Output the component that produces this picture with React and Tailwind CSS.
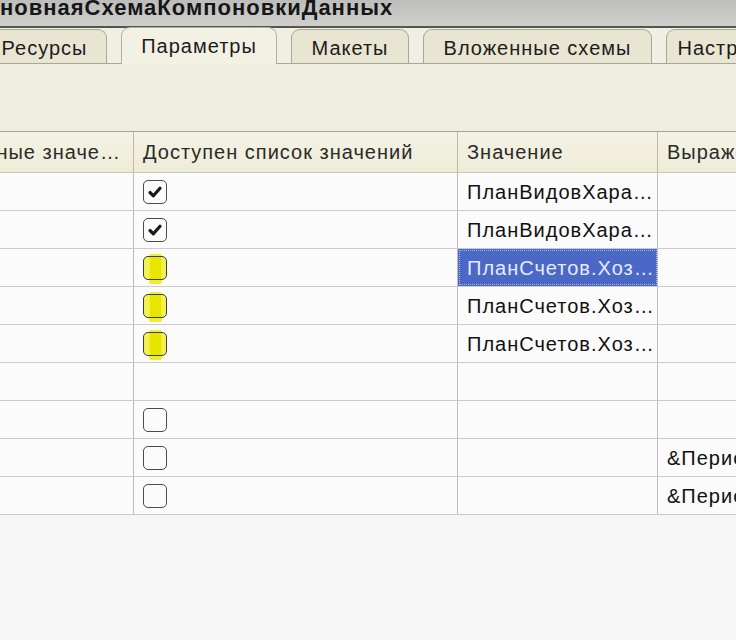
import React from "react";

function Check({ kind }) {
  if (!kind) return null;
  if (kind === "yellow") {
    return (
      <div className="relative w-[24px] h-[24px]">
        <div className="absolute left-[6px] top-[-2px] w-[13px] h-[30px] bg-[#eaea00] opacity-80 rounded-[2px]" />
        <div className="absolute inset-0 rounded-[5px] border-[1.5px] border-[#3d3d30] bg-[#f2ef2a]/80" />
        <div className="absolute left-[7px] top-[1px] w-[11px] h-[22px] bg-[#e8e600]" />
      </div>
    );
  }
  return (
    <div className="w-[24px] h-[24px] rounded-[5px] border-[1.5px] border-[#4a4a4a] bg-[#fbfbfb] flex items-center justify-center">
      {kind === "checked" && (
        <svg width="16" height="16" viewBox="0 0 16 16">
          <path d="M3 8.5 L6.4 11.8 L13 4.2" fill="none" stroke="#1a1a1a" strokeWidth="3.2" strokeLinecap="round" strokeLinejoin="round" />
        </svg>
      )}
    </div>
  );
}

const rows = [
  { cb: "checked", val: "ПланВидовХара…" },
  { cb: "checked", val: "ПланВидовХара…" },
  { cb: "yellow", val: "ПланСчетов.Хоз…", sel: true },
  { cb: "yellow", val: "ПланСчетов.Хоз…" },
  { cb: "yellow", val: "ПланСчетов.Хоз…" },
  { cb: null },
  { cb: "empty" },
  { cb: "empty", expr: "&ПериодНачала" },
  { cb: "empty", expr: "&ПериодОкончания" },
];

const tabs = [
  { t: "Ресурсы", w: "w-[125px]" },
  { t: "Параметры", w: "w-[156px]", active: true },
  { t: "Макеты", w: "w-[118px]" },
  { t: "Вложенные схемы", w: "w-[229px]" },
  { t: "Настройки", w: "w-[130px]" },
];

export default function App() {
  return (
    <div className="w-[736px] h-[640px] overflow-hidden bg-[#f6f6f6] font-['Liberation_Sans',Arial,sans-serif] text-[#1c1c1c]">
      {/* title bar */}
      <div className="h-[28px] overflow-hidden bg-gradient-to-b from-[#bdbdbb] to-[#cfcfcc] border-b-[2px] border-[#55554f]">
        <div className="text-[22px] leading-[22px] font-bold tracking-[1px] whitespace-nowrap -mt-[3px] text-[#161616]">
          новнаяСхемаКомпоновкиДанных
        </div>
      </div>
      {/* tabs */}
      <div className="h-[36px] bg-[#f0efe4] flex items-end gap-[14px] -ml-[18px] border-b border-[#a9a795] whitespace-nowrap">
        {tabs.map((tab) =>
          tab.active ? (
            <div
              key={tab.t}
              className={`${tab.w} shrink-0 h-[37px] -mb-[1px] rounded-t-[9px] border border-b-0 border-[#b3b09c] bg-[#f3f1e3] flex items-center justify-center text-[20px] tracking-[1px] pb-[1px]`}
            >
              {tab.t}
            </div>
          ) : (
            <div
              key={tab.t}
              className={`${tab.w} shrink-0 h-[34px] rounded-t-[9px] border border-b-0 border-[#a9a795] bg-[#e8e5d2] flex items-center justify-center text-[20px] tracking-[1px] pt-[2px]`}
            >
              {tab.t}
            </div>
          )
        )}
      </div>
      {/* panel */}
      <div className="h-[67px] bg-[#efeddf]" />
      {/* table */}
      <div className="border-t border-[#a8a694] bg-[#fbfbfb]">
        {/* header */}
        <div className="flex h-[41px] bg-gradient-to-b from-[#f5f3e4] to-[#eeebd8] border-b border-[#c9c7b6] text-[20px] tracking-[1px] text-[#2a2a2a]">
          <div className="w-[134px] shrink-0 border-r border-[#bdbaa4] overflow-hidden flex items-center justify-end pr-[12px] whitespace-nowrap">
            Доступные значе…
          </div>
          <div className="w-[324px] shrink-0 border-r border-[#bdbaa4] flex items-center pl-[9px] whitespace-nowrap">
            Доступен список значений
          </div>
          <div className="w-[200px] shrink-0 border-r border-[#bdbaa4] flex items-center pl-[9px] whitespace-nowrap">
            Значение
          </div>
          <div className="flex-1 flex items-center pl-[9px] whitespace-nowrap overflow-hidden">Выражение</div>
        </div>
        {rows.map((r, i) => (
          <div key={i} className="flex h-[38px] border-b border-[#cbcbcb] text-[20px] tracking-[1px] text-[#111]">
            <div className="w-[134px] shrink-0 border-r border-[#bababa]" />
            <div className="w-[324px] shrink-0 border-r border-[#bababa] flex items-center pl-[9px]">
              <Check kind={r.cb} />
            </div>
            <div
              className={`w-[200px] shrink-0 border-r border-[#bababa] flex items-center pl-[9px] whitespace-nowrap ${
                r.sel ? "bg-[#4c68c6] text-[#e6ebff] outline-dotted outline-1 outline-[#a8b6e6] -outline-offset-2" : ""
              }`}
            >
              {r.val || ""}
            </div>
            <div className="flex-1 flex items-center pl-[9px] whitespace-nowrap overflow-hidden">{r.expr || ""}</div>
          </div>
        ))}
      </div>
    </div>
  );
}
